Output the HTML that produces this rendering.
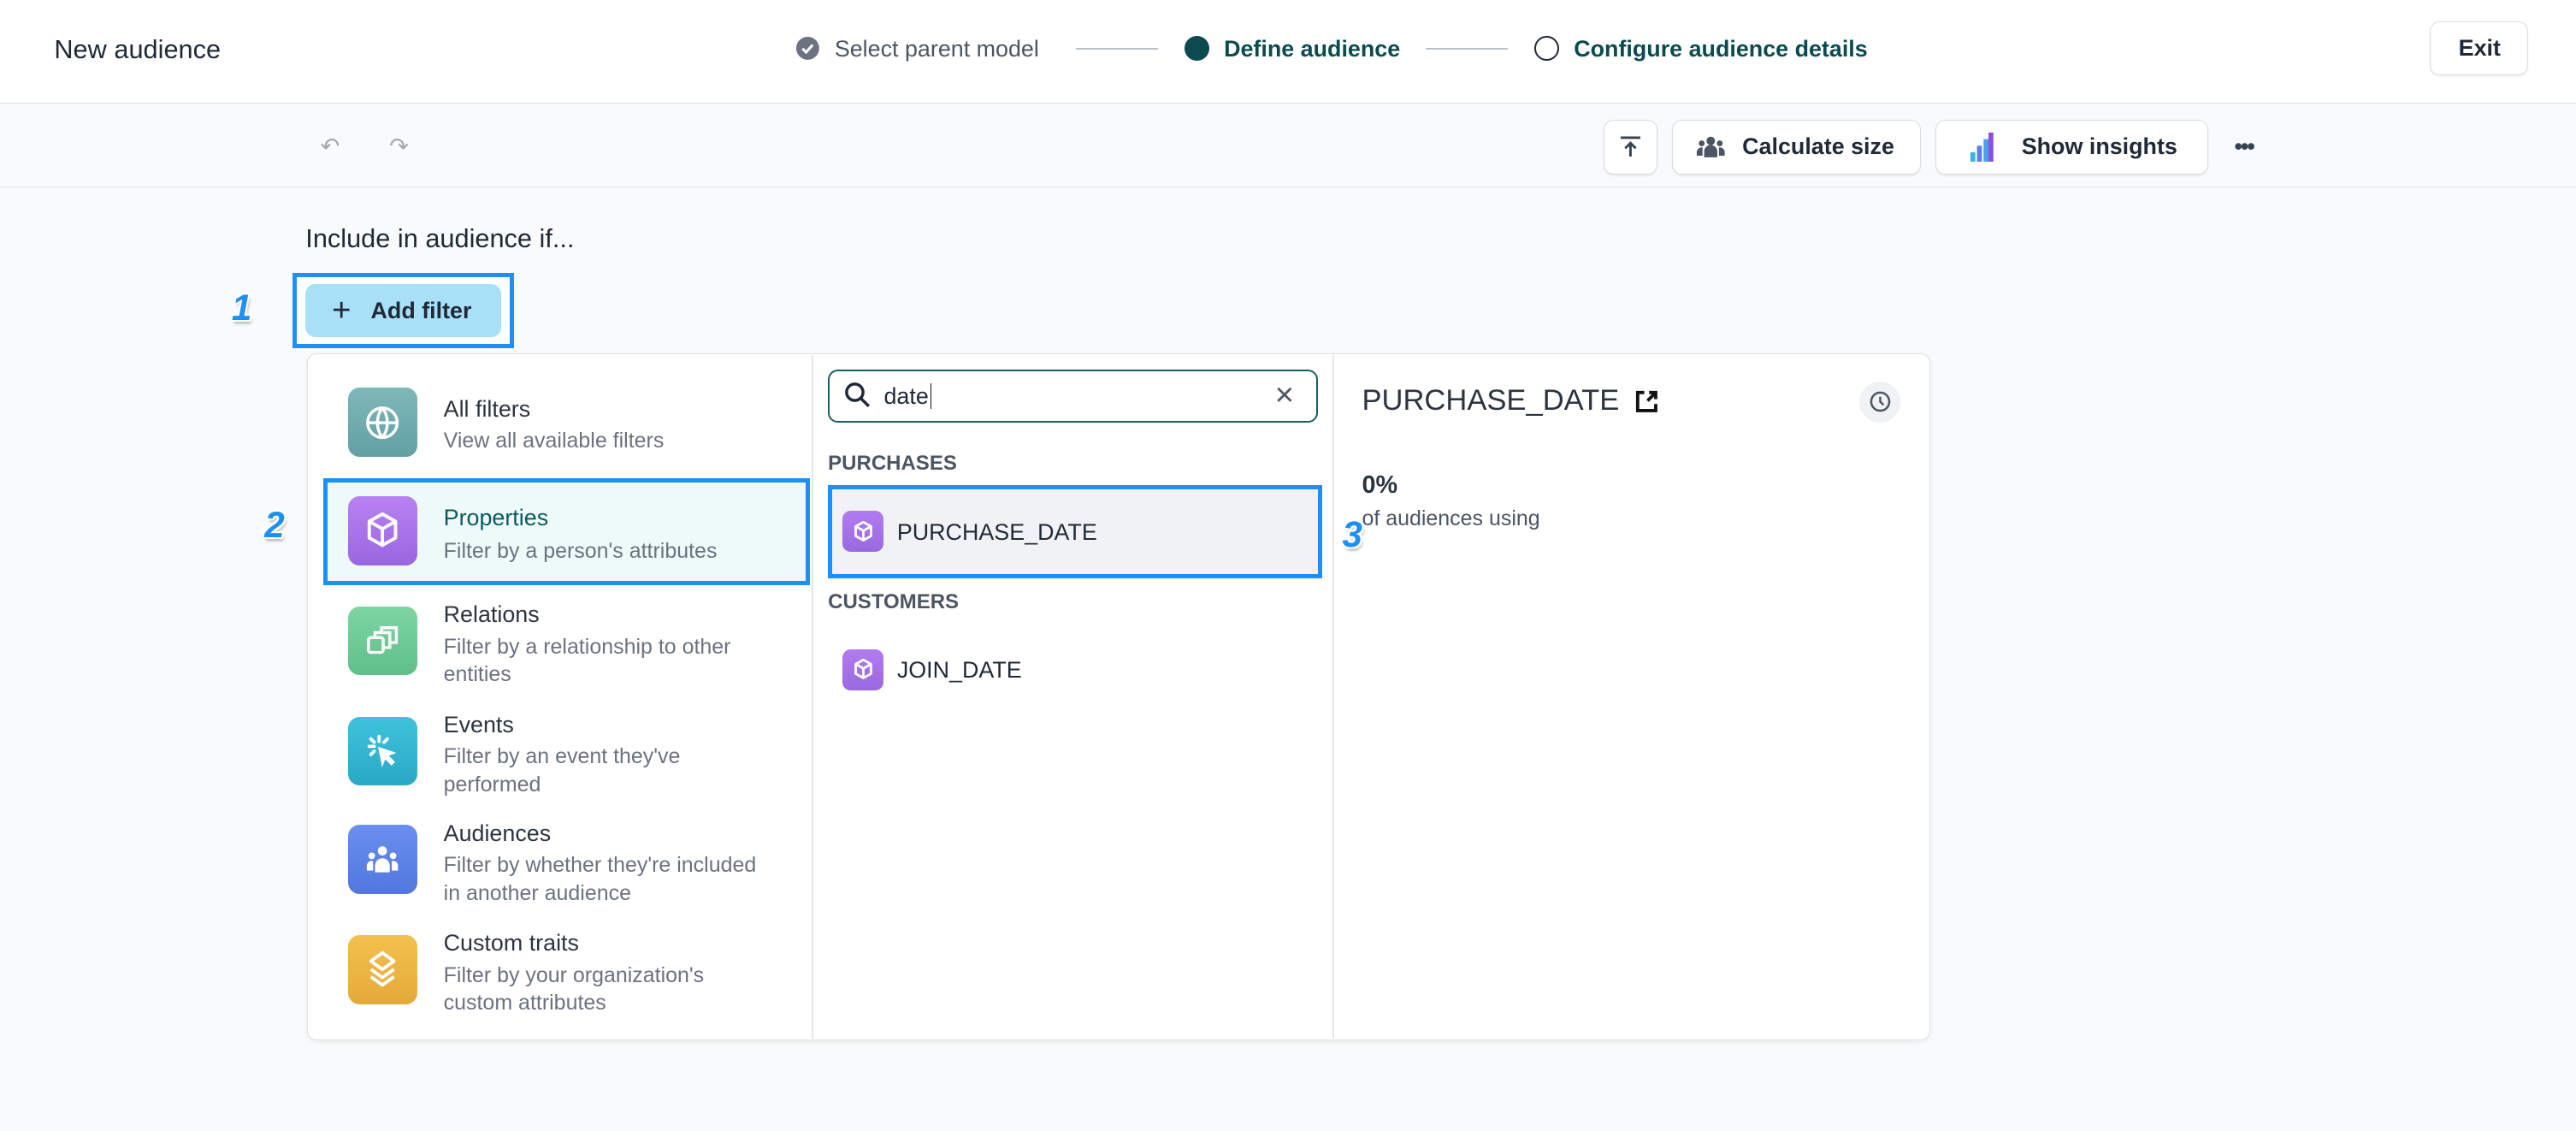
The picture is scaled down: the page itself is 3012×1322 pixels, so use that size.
<!DOCTYPE html>
<html><head><meta charset="utf-8"><style>
*{box-sizing:border-box;margin:0;padding:0}
html,body{width:3012px;height:1322px;overflow:hidden;background:#f9fafb}
#r{zoom:1.92092;width:1568px;height:689px;position:relative;font-family:"Liberation Sans",sans-serif;color:#1f2937}
.a{position:absolute}
.hdr{left:0;top:0;width:1568px;height:63px;background:#fff;border-bottom:1px solid #dde1e6}
.tb{left:0;top:63px;width:1568px;height:51px;border-bottom:1px solid #dde1e6;background:#f9fafb}
.btn{position:absolute;background:#fff;border:1px solid #d9dde3;border-radius:6px;box-shadow:0 1px 1px rgba(0,0,0,.06);font-size:14px;font-weight:bold;display:flex;align-items:center;gap:10px;padding-left:14px}
.t{font-size:14px}
.ico{position:absolute;width:42px;height:42px;border-radius:7px;display:flex;align-items:center;justify-content:center}
.ttl{position:absolute;font-size:14px;color:#2b3440}
.sub{position:absolute;font-size:13px;color:#6b7280;line-height:17px}
.num{position:absolute;font-size:22px;font-weight:bold;font-style:italic;color:#1e8ff7;text-shadow:1px 1px 0 #fff,-1px -1px 0 #fff,1px -1px 0 #fff,-1px 1px 0 #fff,1px 2px 2px rgba(0,0,0,.3)}
.pi{position:absolute;width:25px;height:25px;border-radius:5px;background:linear-gradient(#b27cf0,#9a68e0);display:flex;align-items:center;justify-content:center}
</style></head><body><div id="r">
<div class="a hdr"></div>
<div class="a" style="left:33px;top:21px;font-size:16px">New audience</div>
<svg class="a" style="left:484px;top:22px" width="15" height="15" viewBox="0 0 15 15"><circle cx="7.5" cy="7.5" r="7" fill="#6b7280"/><path d="M4.3 7.7l2.2 2.2 4-4.4" stroke="#fff" stroke-width="1.6" fill="none"/></svg>
<div class="a t" style="left:508px;top:22px;color:#4b5563">Select parent model</div>
<div class="a" style="left:655px;top:29px;width:50px;height:1px;background:#b9c0c8"></div>
<div class="a" style="left:721px;top:22px;width:15px;height:15px;border-radius:50%;background:#0b4a4f"></div>
<div class="a t" style="left:745px;top:22px;color:#0b4a4f;font-weight:bold">Define audience</div>
<div class="a" style="left:868px;top:29px;width:50px;height:1px;background:#b9c0c8"></div>
<div class="a" style="left:934px;top:22px;width:15px;height:15px;border-radius:50%;border:1.5px solid #1f2937"></div>
<div class="a t" style="left:958px;top:22px;color:#0b4a4f;font-weight:bold">Configure audience details</div>
<div class="btn" style="left:1479px;top:13px;width:60px;height:33px;padding-left:17px">Exit</div>

<div class="a tb"></div>
<div class="a" style="left:195px;top:81px;color:#a0a7b1;font-size:14px">↶</div>
<div class="a" style="left:237px;top:81px;color:#a0a7b1;font-size:14px">↷</div>
<div class="btn" style="left:976px;top:73px;width:33px;height:33px;padding-left:9px"><svg width="14" height="14" viewBox="0 0 14 14"><path d="M1 1.5h12M7 13V5M3.8 8L7 4.8 10.2 8" stroke="#374151" stroke-width="1.5" fill="none"/></svg></div>
<div class="btn" style="left:1018px;top:73px;width:151px;height:33px"><svg width="18" height="16" viewBox="0 0 18 16"><circle cx="9" cy="4" r="2.6" fill="#4b5563"/><circle cx="3.5" cy="5.5" r="1.8" fill="#4b5563"/><circle cx="14.5" cy="5.5" r="1.8" fill="#4b5563"/><path d="M5 14v-3.5a4 4 0 018 0V14zM0.5 13v-2.5a3 3 0 013.5-2.5V13zM17.5 13v-2.5a3 3 0 00-3.5-2.5V13z" fill="#4b5563"/></svg>Calculate size</div>
<div class="btn" style="left:1178px;top:73px;width:166px;height:33px;padding-left:20px;gap:16px"><svg width="16" height="18" viewBox="0 0 16 18"><rect x="1" y="12" width="3" height="6" fill="#38b6d6"/><rect x="5" y="8" width="3" height="10" fill="#5b7ee8"/><rect x="9" y="4" width="3" height="14" fill="#4aa0e8"/><rect x="12" y="0" width="3" height="18" fill="#8a4fe0"/></svg>Show insights</div>
<div class="a" style="left:1360px;top:81px;font-size:14px;font-weight:bold;color:#374151;letter-spacing:-1px">•••</div>

<div class="a" style="left:186px;top:136px;font-size:16px">Include in audience if...</div>
<div class="num" style="left:141px;top:175px">1</div>
<div class="a" style="left:178px;top:166px;width:135px;height:46px;border:3px solid #1e8ff7;background:#fff"></div>
<div class="a" style="left:186px;top:173px;width:119px;height:32px;background:#a8e0f7;border-radius:6px;font-size:14px;font-weight:bold;display:flex;align-items:center;padding-left:16px;gap:12px"><span style="font-size:20px;font-weight:normal;line-height:1">+</span>Add filter</div>

<div class="a" style="left:187px;top:215px;width:988px;height:418px;background:#fff;border:1px solid #dde1e6;border-radius:6px;box-shadow:0 1px 3px rgba(0,0,0,.06)"></div>
<div class="a" style="left:494px;top:216px;width:1px;height:416px;background:#e3e6ea"></div>
<div class="a" style="left:811px;top:216px;width:1px;height:416px;background:#e3e6ea"></div>

<div class="ico" style="left:212px;top:236px;background:linear-gradient(#7fb8ba,#62a0a3)"><svg width="22" height="22" viewBox="0 0 22 22" fill="none" stroke="#fff" stroke-width="1.8"><circle cx="11" cy="11" r="9"/><path d="M2 11h18M11 2c-4 5-4 13 0 18M11 2c4 5 4 13 0 18"/></svg></div>
<div class="ttl" style="left:270px;top:241px">All filters</div><div class="sub" style="left:270px;top:260px">View all available filters</div>

<div class="a" style="left:197px;top:291px;width:296px;height:65px;border:3px solid #1e8ff7;background:#eefafa"></div>
<div class="ico" style="left:212px;top:302px;background:linear-gradient(#b882f2,#9a66e0)"><svg width="22" height="24" viewBox="0 0 22 24" fill="none" stroke="#fff" stroke-width="2" stroke-linejoin="round"><path d="M11 2l8 4.5v10L11 21l-8-4.5v-10z"/><path d="M3 6.5l8 4.5 8-4.5M11 11v10"/></svg></div>
<div class="ttl" style="left:270px;top:307px;color:#0b5a5f">Properties</div><div class="sub" style="left:270px;top:327px">Filter by a person's attributes</div>

<div class="ico" style="left:212px;top:369px;background:linear-gradient(#7dd6a3,#5fbf8b)"><svg width="24" height="22" viewBox="0 0 24 22" fill="none" stroke="#fff" stroke-width="1.8"><rect x="3" y="9" width="9" height="9" rx="1.5"/><path d="M7 9V6h9v9h-4M11 6V3h9v9h-4"/></svg></div>
<div class="ttl" style="left:270px;top:366px">Relations</div><div class="sub" style="left:270px;top:385px">Filter by a relationship to other<br>entities</div>

<div class="ico" style="left:212px;top:436px;background:linear-gradient(#3ec3dc,#2aa8c6)"><svg width="22" height="22" viewBox="0 0 22 22" fill="none" stroke="#fff" stroke-width="2" stroke-linecap="round"><path d="M9 2v3M3 8h3M4 3.5l2 2M14 3.5l-2 2M4 13l2-2"/><path d="M9 9l9 3-4 1.5 4 4-1.5 1.5-4-4L11 19z" fill="#fff" stroke-width="1"/></svg></div>
<div class="ttl" style="left:270px;top:433px">Events</div><div class="sub" style="left:270px;top:452px">Filter by an event they've<br>performed</div>

<div class="ico" style="left:212px;top:502px;background:linear-gradient(#6a8ff0,#5277de)"><svg width="22" height="20" viewBox="0 0 22 20" fill="#fff"><circle cx="11" cy="5" r="2.8"/><circle cx="4.5" cy="8" r="2"/><circle cx="17.5" cy="8" r="2"/><path d="M6.5 18v-4a4.5 4.5 0 019 0v4zM1.5 17v-3a3 3 0 013.8-2.8V17zM20.5 17v-3a3 3 0 00-3.8-2.8V17z"/></svg></div>
<div class="ttl" style="left:270px;top:499px">Audiences</div><div class="sub" style="left:270px;top:518px">Filter by whether they're included<br>in another audience</div>

<div class="ico" style="left:212px;top:569px;background:linear-gradient(#f4c14d,#e3aa3a)"><svg width="22" height="24" viewBox="0 0 22 24" fill="none" stroke="#fff" stroke-width="2" stroke-linejoin="round"><path d="M11 2l7 5-7 5-7-5z"/><path d="M4 12l7 5 7-5M4 16.5l7 5 7-5"/></svg></div>
<div class="ttl" style="left:270px;top:566px">Custom traits</div><div class="sub" style="left:270px;top:585px">Filter by your organization's<br>custom attributes</div>
<div class="num" style="left:161px;top:307px">2</div>

<div class="a" style="left:504px;top:225px;width:298px;height:32px;border:1.5px solid #1d5e63;border-radius:6px;background:#fff"></div>
<svg class="a" style="left:514px;top:232px" width="16" height="16" viewBox="0 0 16 16" fill="none" stroke="#1f2937" stroke-width="1.8"><circle cx="6.5" cy="6.5" r="5"/><path d="M10.2 10.2L15 15"/></svg>
<div class="a" style="left:538px;top:233px;font-size:14px">date<span style="border-left:1px solid #111;margin-left:1px"></span></div>
<div class="a" style="left:776px;top:229px;font-size:20px;color:#4b5563">×</div>
<div class="a" style="left:504px;top:275px;font-size:12.5px;font-weight:bold;color:#4b5563">PURCHASES</div>
<div class="a" style="left:504px;top:295px;width:301px;height:57px;border:3px solid #1e8ff7;background:#f1f2f6"></div>
<div class="pi" style="left:513px;top:311px"><svg width="13" height="14" viewBox="0 0 22 24" fill="none" stroke="#fff" stroke-width="2.5" stroke-linejoin="round"><path d="M11 2l8 4.5v10L11 21l-8-4.5v-10z"/><path d="M3 6.5l8 4.5 8-4.5M11 11v10"/></svg></div>
<div class="a" style="left:546px;top:316px;font-size:14px">PURCHASE_DATE</div>
<div class="a" style="left:504px;top:359px;font-size:12.5px;font-weight:bold;color:#4b5563">CUSTOMERS</div>
<div class="pi" style="left:513px;top:395px"><svg width="13" height="14" viewBox="0 0 22 24" fill="none" stroke="#fff" stroke-width="2.5" stroke-linejoin="round"><path d="M11 2l8 4.5v10L11 21l-8-4.5v-10z"/><path d="M3 6.5l8 4.5 8-4.5M11 11v10"/></svg></div>
<div class="a" style="left:546px;top:400px;font-size:14px">JOIN_DATE</div>

<div class="a" style="left:829px;top:234px;font-size:18px;color:#2b3440">PURCHASE_DATE</div>
<svg class="a" style="left:995px;top:237px" width="15" height="15" viewBox="0 0 15 15" fill="none" stroke="#111" stroke-width="2"><path d="M6 2H2v11h11V9M8 7l5-5M9 2h4v4"/></svg>
<div class="a" style="left:1132px;top:232px;width:25px;height:25px;border-radius:50%;background:#f1f2f5"></div>
<svg class="a" style="left:1138px;top:238px" width="13" height="13" viewBox="0 0 13 13" fill="none" stroke="#4b5563" stroke-width="1.3"><circle cx="6.5" cy="6.5" r="5.5"/><path d="M6.5 3.5v3l2 2"/></svg>
<div class="a" style="left:829px;top:287px;font-size:15px;font-weight:bold;color:#2b3440">0%</div>
<div class="a" style="left:829px;top:308px;font-size:13px;color:#4b5563">of audiences using</div>
<div class="num" style="left:817px;top:313px">3</div>
</div></body></html>
